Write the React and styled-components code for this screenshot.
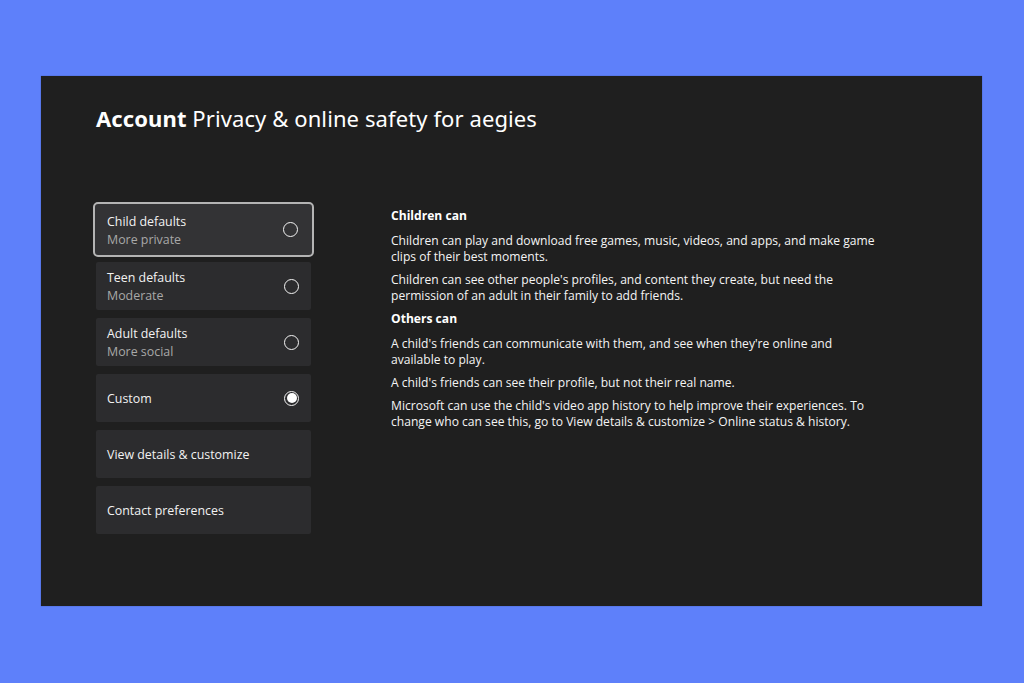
import React from "react";
import styled, { createGlobalStyle } from "styled-components";

const Global = createGlobalStyle`
  html, body { margin: 0; padding: 0; }
  body {
    background: #5e80fa;
    font-family: "Open Sans", "Noto Sans", sans-serif;
  }
`;

const Page = styled.div`
  width: 1024px;
  height: 683px;
  box-sizing: border-box;
  padding: 76px 42px 77px 41px;
  background: #5e80fa;
`;

const Panel = styled.main`
  height: 100%;
  background: #1f1f1f;
  box-sizing: border-box;
  padding: 26px 55px 0 55px;
  color: #fff;
  box-shadow: 0 0 1px rgba(0, 0, 0, 0.4);
`;

const Title = styled.h1`
  margin: 0;
  font-family: "Noto Sans", "Open Sans", sans-serif;
  font-size: 22px;
  font-weight: 400;
  line-height: 32px;
  letter-spacing: 0.1px;
  color: #fff;

  b {
    font-weight: 700;
  }
`;

const Body = styled.div`
  display: flex;
  gap: 80px;
  margin-top: 71px;
`;

const Menu = styled.ul`
  list-style: none;
  margin: 0;
  padding: 0;
  width: 215px;
  display: flex;
  flex-direction: column;
  gap: 8px;
  flex-shrink: 0;
`;

const Item = styled.li`
  position: relative;
  height: 48px;
  box-sizing: border-box;
  background: #2c2c2e;
  border-radius: 2px;
  display: flex;
  align-items: center;
  justify-content: space-between;
  padding: 0 12px 0 11px;
  font-size: 12.4px;
  color: #f2f2f2;

  ${(p) =>
    p.$focused &&
    `
    margin: -3px -3px;
    height: 55px;
    padding: 0 14px 0 12px;
    background: #333335;
    border: 2px solid #b4b4b4;
    border-radius: 5px;
  `}
`;

const Labels = styled.div`
  display: flex;
  flex-direction: column;
  line-height: 18px;
  padding-top: 2px;
`;

const Sub = styled.span`
  color: #a8a8a8;
`;

const Radio = styled.span`
  width: 15px;
  height: 15px;
  box-sizing: border-box;
  border-radius: 50%;
  border: 1.5px solid #f4f4f4;
  display: flex;
  align-items: center;
  justify-content: center;
  flex-shrink: 0;

  &::after {
    content: "";
    width: 10px;
    height: 10px;
    border-radius: 50%;
    background: ${(p) => (p.$checked ? "#fff" : "transparent")};
  }
`;

const Info = styled.section`
  width: 488px;
  font-size: 12.1px;
  line-height: 16px;
  color: #f4f4f4;
  padding-top: 3px;
`;

const Heading = styled.h2`
  margin: 0 0 9px;
  font-size: 12.1px;
  line-height: 16px;
  font-weight: 700;
  color: #fff;
`;

const Para = styled.p`
  margin: 0 0 7px;
`;

const options = [
  { title: "Child defaults", sub: "More private", radio: true, focused: true },
  { title: "Teen defaults", sub: "Moderate", radio: true },
  { title: "Adult defaults", sub: "More social", radio: true },
  { title: "Custom", radio: true, checked: true },
  { title: "View details & customize" },
  { title: "Contact preferences" },
];

export default function App() {
  return (
    <Page>
      <Global />
      <Panel>
        <Title>
          <b>Account</b> Privacy &amp; online safety for aegies
        </Title>
        <Body>
          <Menu>
            {options.map((o) => (
              <Item key={o.title} $focused={o.focused}>
                <Labels>
                  <span>{o.title}</span>
                  {o.sub && <Sub>{o.sub}</Sub>}
                </Labels>
                {o.radio && <Radio $checked={o.checked} />}
              </Item>
            ))}
          </Menu>
          <Info>
            <Heading>Children can</Heading>
            <Para>
              Children can play and download free games, music, videos, and apps, and make game
              clips of their best moments.
            </Para>
            <Para>
              Children can see other people's profiles, and content they create, but need the
              permission of an adult in their family to add friends.
            </Para>
            <Heading>Others can</Heading>
            <Para>
              A child's friends can communicate with them, and see when they're online and
              available to play.
            </Para>
            <Para>A child's friends can see their profile, but not their real name.</Para>
            <Para>
              Microsoft can use the child's video app history to help improve their experiences. To
              change who can see this, go to View details &amp; customize &gt; Online status &amp; history.
            </Para>
          </Info>
        </Body>
      </Panel>
    </Page>
  );
}
